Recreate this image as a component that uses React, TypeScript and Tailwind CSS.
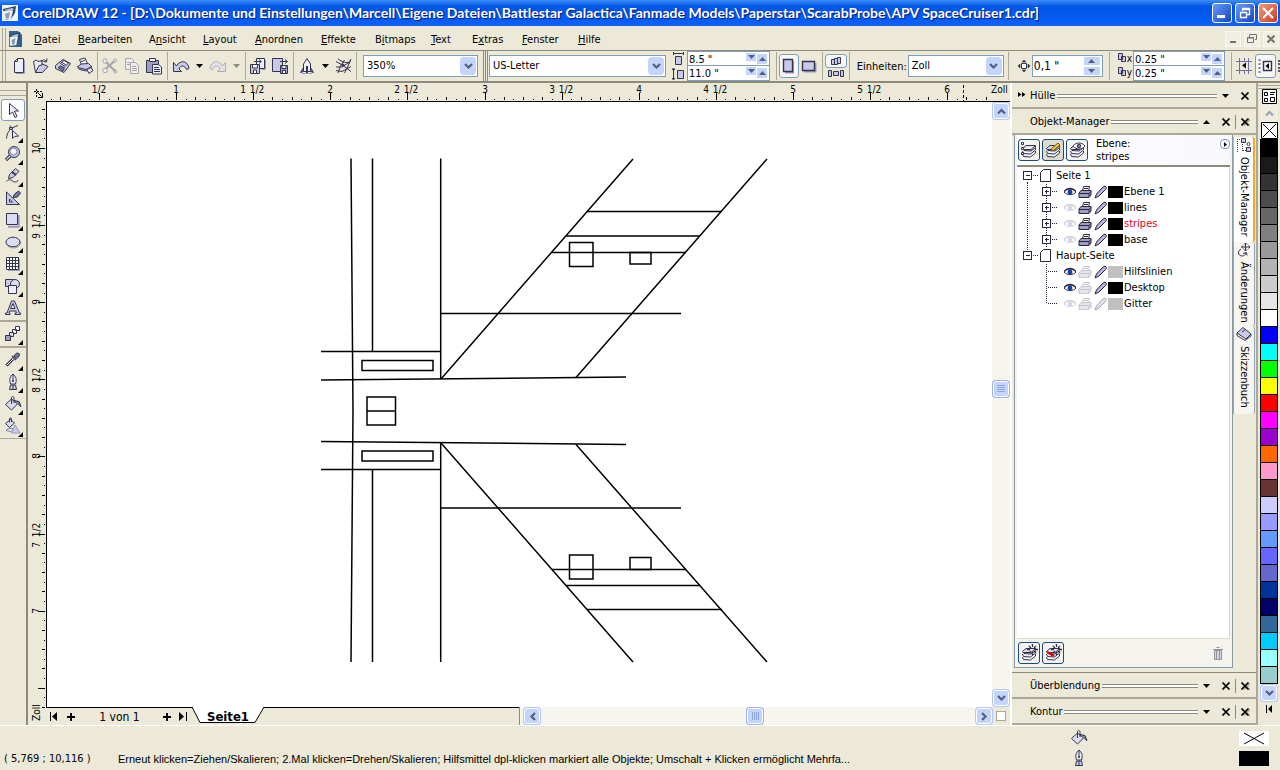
import { Fragment, useState } from 'react'
import type { ReactNode } from 'react'

type IconProps = {
  children: ReactNode;
  w?: number;
  h?: number;
  className?: string;
}

const INK = '#34344e';
const LILAC = '#c9c9ea';

function Icon({ children, w = 18, h = 18, className = '' }: IconProps) {
  return (
    <svg width={w} height={h} viewBox={`0 0 ${w} ${h}`} className={`shrink-0 ${className}`}
      fill="none" stroke={INK} strokeWidth="1" aria-hidden="true">
      {children}
    </svg>
  )
}

const CaretDown = () => (
  <svg width="7" height="4" viewBox="0 0 7 4" className="shrink-0" aria-hidden="true"><path d="M0 0h7L3.500 4z" /></svg>
)

/* ---------- toolbar icons ---------- */

const NewIcon = () => <Icon><path d="M4.500 4.500l3-3h6v14h-9z" fill="#eeeefa" /><path d="M7.500 1.500v3h-3" /><path d="M14.500 3v13.500H6" stroke="#9a9ac0" /></Icon>;

const OpenIcon = () => (
  <Icon>
    <path d="M3.500 15.500l-2-11 3-1.500 1.500 1.500 4-1v4" fill="#eeeefa" />
    <path d="M3.500 15.500l3.500-7 3-.5.500-1 5.500 2.500-5.500 6z" fill={LILAC} />
    <path d="M9.500 5c1-2.500 3-3 5-.500M15 1.500l-.500 3.500-3-.500" />
  </Icon>
);

const SaveIcon = () => (
  <Icon>
    <path d="M1.500 8.500L9 2.500l7.500 4-6.500 9-8.500-4z" fill={LILAC} />
    <path d="M6.500 6.500l3.500-3 4.500 2.500-3.500 3.500z" fill="#fff" />
    <path d="M4 10.500l2.500-1.500 4 2-1.500 3z" fill="#77779c" />
    <path d="M8 5.500l4 2.500" />
  </Icon>
);

const PrintIcon = () => (
  <Icon>
    <path d="M5.500 8L3.500 2.500 9 1l2.500 6z" fill="#fff" />
    <path d="M1.500 9.500l4-2.500 7-.500 3.500 3.500-5.500 4-7-1.500z" fill={LILAC} />
    <path d="M2 10.500l8 2 6-3M5 4.500l4-1" />
    <path d="M11 12.500l4-2 2 3-4 3z" fill="#eeeefa" />
  </Icon>
);

const CutIcon = () => (
  <Icon>
    <g stroke="#a9a6a6">
      <path d="M5.500 5.500l9 9M13.500 4L5 11.500" strokeWidth="2.200" />
      <circle cx="4" cy="4" r="2.200" fill="#ececf2" /><circle cx="4" cy="13.500" r="2.200" fill="#ececf2" />
      <circle cx="14" cy="3.500" r="1.500" /><circle cx="14.500" cy="14.500" r="1.500" />
    </g>
  </Icon>
);

const CopyIcon = () => (
  <Icon>
    <g stroke="#a9a6a6" fill="#ececf2">
      <path d="M2.500 1.500h6l2 2v9h-8z" /><path d="M7.500 5.500h5l3 3v8h-8z" />
      <path d="M4 5.500h4M4 7.500h3M9 9.500h4M9 11.500h5M9 13.500h5" />
    </g>
  </Icon>
);

const PasteIcon = () => (
  <Icon>
    <path d="M1.500 3.500h12v12h-12z" fill="#9d9dc4" /><path d="M4.500 1.500h6v3h-6z" fill="#fff" />
    <path d="M7.500 7.500h6l3 2.500v7h-9z" fill="#eeeefa" /><path d="M9 10.500h5M9 12.500h6M9 14.500h6" />
  </Icon>
);

const UndoIcon = () => <Icon><path d="M1.500 5.500v9h8l-2.500-2.500c1-4 6-4 7.500.500l2.500-1C16 3.500 8 2.500 4.500 9z" fill={LILAC} /></Icon>;

const RedoIcon = () => <Icon><path d="M16.500 5.500v9h-8l2.500-2.500c-1-4-6-4-7.500.500L1 11.500C2 3.500 10 2.500 13.500 9z" fill="#e2e2ea" stroke="#b0aead" /></Icon>;

const ImportIcon = () => (
  <Icon>
    <path d="M7.500 1.500h8v10h-8z" fill="#eeeefa" /><path d="M5 4.500h7M10 2.500l2.500 2-2.500 2" />
    <path d="M1.500 7.500h9v9h-9z" fill={LILAC} /><path d="M3.500 8v3h5V8M4.500 16v-3h3v3" fill="#fff" /><path d="M16.500 3v9.500h-4" stroke="#9a9ac0" />
  </Icon>
);

const ExportIcon = () => (
  <Icon>
    <path d="M1.500 1.500h10v13h-10z" fill={LILAC} /><path d="M9 4.500h7M14 2.500l2.500 2-2.500 2" />
    <path d="M9.500 8.500h7v8h-7z" fill="#9d9dc4" /><path d="M11 9v2.500h4V9M11.500 16v-2.500h3V16" fill="#fff" />
  </Icon>
);

const RocketIcon = () => (
  <Icon>
    <path d="M2.500 15.500l3-5v4zM15.500 15.500l-3-5v4z" fill="#77779c" />
    <path d="M5.500 14.500V7L9 1.500 12.500 7v7.500z" fill="#eeeefa" /><path d="M9 9v7" strokeWidth="2" /><path d="M4 16.500h10" stroke="#9a9ac0" />
  </Icon>
);

const NetIcon = () => <Icon><path d="M1 4.500l7 4 8 6M1 10l6 0 9-6M3 16l2.500-7 4-6M9.500 16l3-6 3.500-8M1 13.500l6 1 9-5M3 2l5 3 7 1" /><circle cx="8" cy="8" r="1" fill={INK} /></Icon>;

/* ---------- toolbox icons ---------- */

const tools: { name: string; flyout?: boolean; icon: ReactNode }[] = [
  { name: 'Auswahl', icon: <Icon><path d="M5.500 2.500v11l3-2.500 2.500 5.500 2-1-2.500-5.500h4z" fill="#eeeefa" /></Icon> },
  { name: 'Form', flyout: true, icon: <Icon><path d="M2.500 15.500C3 9 6 5 14 2.500M6 2.500l2 3" /><path d="M5.500 4.500h3v2h-3z" fill={LILAC} /><path d="M8.500 7.500v8l2-2 4-.5z" fill="#eeeefa" /></Icon> },
  { name: 'Zoom', flyout: true, icon: <Icon><path d="M6.500 10.500L2 15" strokeWidth="3.400" /><path d="M6.500 10.500L2.500 14.500" stroke={LILAC} strokeWidth="1.500" /><circle cx="10" cy="7" r="5.500" fill={LILAC} /><circle cx="9.500" cy="6.500" r="3.500" fill="#f4f4ff" stroke="#8080aa" /></Icon> },
  { name: 'Freihand', flyout: true, icon: <Icon><path d="M4.500 11.500l1-4L11.500 1.500l3.500 3L9 10.500z" fill={LILAC} /><path d="M8 5l4 3" strokeWidth="1.600" /><path d="M2.500 14.500c2-2.500 4-2 6-.500s4 1.500 6-1" /></Icon> },
  { name: 'Bemaßung', icon: <Icon><path d="M2.500 3v12.500h13z" fill={LILAC} /><path d="M5.500 10v3h3z" fill="#fff" /><path d="M9 8.500l1.500-3.500 4-3 2 2-3 4z" fill="#77779c" /></Icon> },
  { name: 'Rechteck', flyout: true, icon: <Icon><path d="M14.700 4v11.700H4" stroke="#9a9ac0" strokeWidth="2" /><path d="M2.500 2.500h11v11h-11z" fill="#dcdcf0" /></Icon> },
  { name: 'Ellipse', flyout: true, icon: <Icon><ellipse cx="9.500" cy="10" rx="7" ry="5" stroke="#9a9ac0" /><ellipse cx="9" cy="9" rx="7" ry="4.800" fill="#dcdcf0" /></Icon> },
  { name: 'Gitterpapier', flyout: true, icon: <Icon><path d="M2.500 2.500h12v12h-12z" fill="#fff" /><path d="M2.500 5.500h12M2.500 8.500h12M2.500 11.500h12M5.500 2.500v12M8.500 2.500v12M11.500 2.500v12" /><path d="M4 15.500h11.500V4" stroke="#9a9ac0" /></Icon> },
  { name: 'Standardformen', flyout: true, icon: <Icon><path d="M1.500 2.500h8v7h-8z" fill={LILAC} /><circle cx="11" cy="7" r="4.500" fill="#dcdcf0" /><path d="M4.500 8.500h8v8h-8z" fill="#eeeefa" /></Icon> },
  { name: 'Text', icon: <Icon><path d="M1.500 15.500h4.500v-1.500H5l.7-2h6l.8 2H11v1.500h5.500V14h-1L10.500 2h-3L3 14H1.500zM6.500 9.500L9 4.500l2 5z" fill={LILAC} fillRule="evenodd" /></Icon> },
  { name: 'Überblendung', flyout: true, icon: <Icon><path d="M11.500 1.500h4v4h-4zM8.500 4.500h4v4h-4z" fill="#fff" /><path d="M5.500 7.500h4v4h-4z" fill="#dcdcf0" /><path d="M1.500 10.500h5v5h-5z" fill="#9d9dc4" /></Icon> },
  { name: 'Pipette', flyout: true, icon: <Icon><path d="M9 8l-6.500 6.500" strokeWidth="3" /><path d="M9 8l-6 6" stroke="#fff" /><path d="M8 5l4 4" strokeWidth="1.600" /><path d="M10 5l2-2.500 2-.5 1.500 1-.5 2.500-2.500 2z" fill="#77779c" /></Icon> },
  { name: 'Umriss', flyout: true, icon: <PenNib /> },
  { name: 'Füllung', flyout: true, icon: <Bucket /> },
  { name: 'Interaktive Füllung', flyout: true, icon: <Icon><path d="M1.500 6.500l5-4 4 3.500-5 4.500z" fill="#dcdcf0" /><path d="M5.500 5.500V2c0-1.500 2-1.500 2 0v3" /><path d="M2 13.500l3-2h5l-3 3z" fill="#eeeefa" stroke="#8080aa" /><path d="M11 8l5 8H7.500z" fill={LILAC} stroke="#9a9ac0" /></Icon> },
];

function PenNib() {
  return (
    <Icon>
      <path d="M9 1c3 3 4 5 2.500 10h-5C5 6 6 4 9 1z" fill="#eeeefa" /><path d="M9 2v5" /><circle cx="9" cy="8" r=".700" fill={INK} />
      <path d="M6.500 12h5l1 4.500h-7z" fill={LILAC} /><path d="M9 12v5" />
    </Icon>
  )
}

function Bucket() {
  return (
    <Icon>
      <path d="M1.500 9.500L7.500 4l6 5-6 6z" fill="#dcdcf0" /><path d="M7.500 9V3c0-2 2.500-2 2.500 0v5" />
      <path d="M10 5.500l5 1 2 5c-1 .5-2-2-3-3" fill="#77779c" />
    </Icon>
  )
}

/* ---------- small controls ---------- */

const Sep = () => <span className="mx-1 h-7 w-px shrink-0 bg-[#aca899]" />;

function ToolButton({ label, children }: { label: string; children: ReactNode }) {
  return <button type="button" aria-label={label} className="flex h-6 w-[22px] shrink-0 items-center justify-center">{children}</button>
}

function Chevron({ up = false }: { up?: boolean }) {
  return (
    <svg width="9" height="7" viewBox="0 0 9 7" fill="none" stroke="#4d6185" strokeWidth="2.200" aria-hidden="true">
      <path d={up ? 'M1 5.500l3.500-3.500L8 5.500' : 'M1 1l3.500 3.500L8 1'} />
    </svg>
  )
}

function Combo({ id, label, value, className }: { id?: string; label?: string; value: string; className: string }) {
  return (
    <div className={`relative h-[22px] shrink-0 border border-[#7f9db9] bg-white ${className}`}>
      <select id={id} aria-label={label} defaultValue={value} className="h-full w-full appearance-none bg-transparent pl-[3px] text-[11px] leading-5 outline-none">
        <option>{value}</option>
      </select>
      <span className="pointer-events-none absolute inset-y-px right-px flex w-4 items-center justify-center rounded-sm bg-[#c4d4fb]">
        <Chevron />
      </span>
    </div>
  )
}

function SpinRow({ label, value }: { label: string; value: string }) {
  const [val, setVal] = useState(value);

  return (
    <div className="flex h-[14px] items-center gap-px bg-white">
      <input aria-label={label} value={val} onChange={(e) => setVal(e.target.value)} className="w-0 min-w-0 flex-1 bg-transparent pt-0.5 pl-px text-[11px] leading-3 outline-none" />
      <button type="button" aria-label={`${label} kleiner`} className="mb-1 flex h-2 w-2.5 items-center justify-center bg-[#c4d4fb]">
        <svg width="7" height="4" aria-hidden="true"><path d="M0 0h7L3.500 4z" fill="#4d6185" /></svg>
      </button>
      <button type="button" aria-label={`${label} größer`} className="mr-0.5 flex h-2.5 w-2.5 items-center justify-center bg-[#c4d4fb]">
        <svg width="7" height="4" aria-hidden="true"><path d="M0 4h7L3.500 0z" fill="#4d6185" /></svg>
      </button>
    </div>
  )
}

/* ---------- title bar and menu ---------- */

function AppLogo({ small = false }: { small?: boolean }) {
  return (
    <svg width={small ? 13 : 16} height="16" viewBox="0 0 16 16" className="shrink-0" preserveAspectRatio="none" aria-hidden="true">
      <path d={small ? 'M0 0h11l5 4v12H0z' : 'M0 0h16v16H0z'} fill={small ? '#35618f' : '#f6f6ff'} />
      <path d="M1 4l13-3-1 7-4 6-8 1z" fill="#27486e" /><path d="M1 6l8-1 2 1-2 8-8 1z" fill="#eef0f8" />
      <path d="M3 9l5-2-1 6-3 1z" fill="#8a9cb4" /><path d="M2 5l8-2 2 1-2 2z" fill="#b8c4d8" />
    </svg>
  )
}

function TitleBar() {
  return (
    <header className="flex h-[26px] shrink-0 items-center bg-linear-to-b from-[#3c8cf6] via-[#0054e6] via-25% to-[#0a62fb] pr-0.5 pl-0.5">
      <AppLogo />
      <h1 className="ml-1 flex-1 overflow-hidden font-[Lato,'Open_Sans',sans-serif] text-[14px] leading-5 font-bold whitespace-nowrap text-white [text-shadow:1px_1px_1px_#0a1883]">
        CorelDRAW 12 - [D:\Dokumente und Einstellungen\Marcell\Eigene Dateien\Battlestar Galactica\Fanmade Models\Paperstar\ScarabProbe\APV SpaceCruiser1.cdr]
      </h1>
      <div className="flex gap-[3px]">
        <button type="button" aria-label="Minimieren" className="flex size-5 items-end rounded-[3px] border border-white bg-linear-to-br from-[#6a9bf6] to-[#1941c4] p-1"><span className="h-[3px] w-2 bg-white" /></button>
        <button type="button" aria-label="Wiederherstellen" className="flex size-5 items-center justify-center rounded-[3px] border border-white bg-linear-to-br from-[#6a9bf6] to-[#1941c4]">
          <svg width="12" height="12" viewBox="0 0 12 12" fill="none" stroke="#fff" aria-hidden="true"><path d="M3.500 4V1.500h7v6H8M4 2.500h7M1.500 5.500h6v5h-6zM1 5.500h7" strokeWidth="1.300" /></svg>
        </button>
        <button type="button" aria-label="Schließen" className="flex size-5 items-center justify-center rounded-[3px] border border-white bg-linear-to-br from-[#f09a80] to-[#cc3311]">
          <svg width="12" height="12" viewBox="0 0 12 12" stroke="#fff" strokeWidth="2" aria-hidden="true"><path d="M1 1l10 10M11 1L1 11" /></svg>
        </button>
      </div>
    </header>
  )
}

const menus: [string, string, string, string][] = [
  ['', 'D', 'atei', 'w-11'],
  ['', 'B', 'earbeiten', 'w-[71px]'],
  ['A', 'n', 'sicht', 'w-[54px]'],
  ['', 'L', 'ayout', 'w-[52px]'],
  ['', 'A', 'nordnen', 'w-[66px]'],
  ['', 'E', 'ffekte', 'w-[54px]'],
  ['B', 'i', 'tmaps', 'w-14'],
  ['', 'T', 'ext', 'w-[41px]'],
  ['E', 'x', 'tras', 'w-[50px]'],
  ['', 'F', 'enster', 'w-14'],
  ['', 'H', 'ilfe', 'w-10'],
];

const Grip = () => <span className="ml-0.5 h-full w-1 shrink-0 border-x border-[#aca899]" />;

function MenuBar() {
  return (
    <nav className="flex h-[25px] shrink-0 items-center border-b border-[#8d897b] bg-[#ece9d8] pt-0.5">
      <Grip />
      <span className="mr-3 ml-[3px]"><AppLogo small /></span>
      {menus.map(([before, key, after, width]) => (
        <button key={key + after} type="button" className={`shrink-0 pt-0.5 text-left ${width}`}>{before}<u>{key}</u>{after}</button>
      ))}
      <div className="ml-auto flex gap-[3px] pr-px">
        <button type="button" aria-label="Fenster minimieren" className="flex size-4 items-end justify-center border border-[#f8f7f2] bg-[#f1efe5] pb-[3px]"><span className="h-0.5 w-1.5 bg-[#777468]" /></button>
        <button type="button" aria-label="Fenster wiederherstellen" className="flex size-4 items-center justify-center border border-[#f8f7f2] bg-[#f1efe5]">
          <svg width="10" height="10" viewBox="0 0 10 10" fill="none" stroke="#777468" aria-hidden="true"><path d="M2.500 3V.500h7v5H8M.500 3.500h6v5h-6zM0 4h7" /></svg>
        </button>
        <button type="button" aria-label="Fenster schließen" className="flex size-4 items-center justify-center border border-[#f8f7f2] bg-[#f1efe5]">
          <svg width="8" height="8" viewBox="0 0 8 8" stroke="#777468" strokeWidth="2" aria-hidden="true"><path d="M.500.500l7 7M7.500.500l-7 7" /></svg>
        </button>
      </div>
    </nav>
  )
}

function ToolBar() {
  return (
    <div className="flex h-8 shrink-0 items-center overflow-hidden border-b-2 border-[#8d897b] bg-[#ece9d8]">
      <div className="flex h-full w-[483px] shrink-0 items-center">
        <Grip />
        <span className="w-0.5" />
        <ToolButton label="Neu"><NewIcon /></ToolButton>
        <ToolButton label="Öffnen"><OpenIcon /></ToolButton>
        <ToolButton label="Speichern"><SaveIcon /></ToolButton>
        <ToolButton label="Drucken"><PrintIcon /></ToolButton>
        <span className="mx-px h-7 w-px bg-[#aca899]" />
        <ToolButton label="Ausschneiden"><CutIcon /></ToolButton>
        <ToolButton label="Kopieren"><CopyIcon /></ToolButton>
        <ToolButton label="Einfügen"><PasteIcon /></ToolButton>
        <span className="mx-0.5 h-7 w-px bg-[#aca899]" />
        <ToolButton label="Rückgängig"><UndoIcon /></ToolButton>
        <span className="mx-1"><CaretDown /></span>
        <ToolButton label="Wiederherstellen"><RedoIcon /></ToolButton>
        <span className="mx-1 opacity-40"><CaretDown /></span>
        <span className="mx-px h-7 w-px bg-[#aca899]" />
        <ToolButton label="Importieren"><ImportIcon /></ToolButton>
        <ToolButton label="Exportieren"><ExportIcon /></ToolButton>
        <span className="mx-0.5 h-7 w-px bg-[#aca899]" />
        <ToolButton label="Anwendungen"><RocketIcon /></ToolButton>
        <span className="mx-1"><CaretDown /></span>
        <ToolButton label="Online"><NetIcon /></ToolButton>
        <span className="mr-1.5 ml-px h-7 w-px bg-[#aca899]" />
        <Combo label="Zoomfaktor" value="350%" className="w-[115px]" />
      </div>
      <div className="flex h-full w-[5px] shrink-0 border-x border-[#8d897b]"><span className="mx-auto w-px bg-[#8d897b]" /></div>
      <Combo label="Papierformat" value="US-Letter" className="ml-px w-[177px]" />
      <div className="ml-1.5 flex flex-col gap-px">
        <Icon w={14} h={14}><path d="M1 1.500h11M1.500 0v3M11.500 0v3" /><path d="M3.500 4.500h6v8h-6z" fill={LILAC} /></Icon>
        <Icon w={14} h={14}><path d="M1.500 2v10M0 3l1.500-2L3 3M0 11l1.500 2L3 11" /><path d="M5.500 3.500h6v8h-6z" fill={LILAC} /></Icon>
      </div>
      <div className="ml-px w-[83px] shrink-0 divide-y divide-[#7f9db9] border border-[#7f9db9]">
        <SpinRow label="Breite" value={'8.5 "'} />
        <SpinRow label="Höhe" value={'11.0 "'} />
      </div>
      <span className="ml-1.5 h-7 w-px bg-[#aca899]" />
      <button type="button" aria-label="Hochformat" className="ml-0.5 flex h-6 w-[22px] items-center justify-center rounded-[3px] border border-[#7f9db9] bg-[#f7f7f5]">
        <Icon w={13} h={16}><path d="M11 3v11.500H3" stroke="#9a9ac0" strokeWidth="2" /><path d="M1.500 1.500h9v12h-9z" fill={LILAC} strokeWidth="1.400" /></Icon>
      </button>
      <ToolButton label="Querformat"><Icon w={17} h={13}><path d="M14.500 3v8.500H3" stroke="#9a9ac0" strokeWidth="2" /><path d="M1.500 1.500h12v9h-12z" fill={LILAC} strokeWidth="1.400" /></Icon></ToolButton>
      <span className="ml-px h-7 w-px bg-[#aca899]" />
      <div className="ml-0.5 flex flex-col items-center">
        <button type="button" aria-label="Alle Seiten" className="flex h-3.5 w-[22px] items-center justify-center rounded-[3px] border border-[#7f9db9] bg-[#f7f7f5]">
          <Icon w={12} h={10}><path d="M1.500 3.500h3v5h-3zM4.500 2.500h3v6h-3zM7.500 1.500h3v6h-3z" fill={LILAC} /></Icon>
        </button>
        <button type="button" aria-label="Aktuelle Seite"><Icon w={18} h={10}><path d="M1.500 2.500h3v6h-3zM6.500 3.500h5v4h-5zM13.500 2.500h3v6h-3z" fill={LILAC} /></Icon></button>
      </div>
      <span className="ml-0.5 h-7 w-px bg-[#aca899]" />
      <label htmlFor="units" className="ml-[7px] w-[51px] shrink-0 pt-0.5 whitespace-nowrap">Einheiten:</label>
      <Combo id="units" value="Zoll" className="w-24" />
      <Sep />
      <span className="ml-1"><Icon w={15} h={15}><path d="M4.500 4.500h5v5h-5z" fill="#fff" /><path d="M5 3l2-2 2 2zM5 11l2 2 2-2zM3 5L1 7l2 2zM11 5l2 2-2 2z" fill={INK} strokeWidth=".6" /></Icon></span>
      <div className="flex h-[22px] w-[71px] shrink-0 items-center border border-[#7f9db9] bg-white pr-0.5">
        <input aria-label="Schrittweite" defaultValue={'0,1 "'} className="w-0 min-w-0 flex-1 pl-px text-xs outline-none" />
        <div className="flex flex-col gap-0.5">
          <button type="button" aria-label="Mehr" className="flex h-2 w-4 items-center justify-center bg-[#c4d4fb]"><svg width="7" height="4" aria-hidden="true"><path d="M0 4h7L3.500 0z" fill="#4d6185" /></svg></button>
          <button type="button" aria-label="Weniger" className="flex h-2 w-4 items-center justify-center bg-[#c4d4fb]"><svg width="7" height="4" aria-hidden="true"><path d="M0 0h7L3.500 4z" fill="#4d6185" /></svg></button>
        </div>
      </div>
      <span className="ml-1.5 h-7 w-px bg-[#aca899]" />
      <div className="ml-2 flex flex-col text-[10px] leading-[14px]">
        {['x', 'y'].map((axis) => (
          <span key={axis} className="flex items-end">
            <Icon w={9} h={14}><path d="M.500 1.500h4v6h-4zM3.500 4.500h4v5h-4z" fill={LILAC} /></Icon>{axis}
          </span>
        ))}
      </div>
      <div className="ml-px w-[92px] shrink-0 divide-y divide-[#7f9db9] border border-[#7f9db9]">
        <SpinRow label="Duplikatabstand x" value={'0.25 "'} />
        <SpinRow label="Duplikatabstand y" value={'0.25 "'} />
      </div>
      <span className="mr-px ml-1.5 h-7 w-px shrink-0 bg-[#aca899]" />
      <ToolButton label="An Gitter ausrichten"><Icon><path d="M4.500 1v16M13.500 1v16M1 4.500h16M1 13.500h16M9.500 1v3M9.500 14v3" stroke="#7070a0" /><path d="M11 5.500v6L7 8.500z" fill="#000" stroke="none" /></Icon></ToolButton>
      <button type="button" aria-label="An Hilfslinien ausrichten" className="flex h-6 w-[21px] shrink-0 items-center justify-center rounded-[3px] border border-[#7f9db9] bg-[#f7f7f5]">
        <Icon w={17}><path d="M2.500 2v15" strokeDasharray="2 2" strokeWidth="2" stroke="#8080aa" /><path d="M6.500 4.500h8v9h-8z" strokeWidth="1.400" /><path d="M12 6v6L8.500 9z" fill="#000" stroke="none" /></Icon>
      </button>
      <span className="ml-0.5 h-3 border-l-2 border-dotted border-[#55557a]" />
    </div>
  )
}

function ToolBox() {
  return (
    <aside className="flex w-7 shrink-0 flex-col border-r-2 border-[#8d897b] bg-[#ece9d8]">
      <div className="mt-[7px] mb-[3px] h-1.5 border-y border-[#aca899]" />
      {tools.map((tool, i) => (
        <Fragment key={tool.name}>
          {(i === 10 || i === 11) && <hr className="my-px h-0.5 border-t-0 bg-[#aca899]" />}
          <button
            type="button"
            aria-label={tool.name}
            className={i === 0
              ? 'ml-px flex h-[22px] w-6 shrink-0 items-center justify-center rounded-[3px] border border-[#7f9db9] bg-white'
              : 'relative flex h-[22px] w-[26px] shrink-0 items-center justify-center'}
          >
            {tool.icon}
            {tool.flyout && <svg width="5" height="5" className="absolute right-[3px] bottom-0" aria-hidden="true"><path d="M5 0v5H0z" /></svg>}
          </button>
        </Fragment>
      ))}
      <hr className="my-px border-[#aca899]" />
    </aside>
  )
}

/* ---------- rulers ---------- */

const INCH = 154.200;

// heights of the sixteenth ticks, whole and half inches are the longest
function tickLength(i: number) {
  if (i % 8 === 0) return 7;
  if (i % 2 === 0) return 3;
  return 1;
}

function TopRuler() {
  const ticks = Array.from({ length: 101 }, (_, i) => i);

  return (
    <svg className="block h-[18px] w-full shrink-0" fontSize="10" aria-hidden="true">
      {ticks.map((i) => {
        const x = Math.round(53 + ((i - 8) * INCH) / 16);
        if (x < 3 || x > 960) return null;
        const whole = Math.floor(i / 16);
        const half = i % 16 === 8;
        return (
          <g key={i}>
            <rect x={x} y={17 - tickLength(i)} width="1" height={tickLength(i)} />
            {i % 16 === 0 && <text x={x} y="10" textAnchor="middle">{whole}</text>}
            {half && <text x={whole > 0 ? x + 4 : x} y="10" textAnchor="middle">1/2</text>}
            {half && whole > 0 && <text x={x - 10} y="10" textAnchor="middle">{whole}</text>}
          </g>
        )
      })}
      <path d="M917.500 2v16" stroke="#000" strokeDasharray="3 2" />
      <text x="945" y="10">Zoll</text>
    </svg>
  )
}

function SideRuler() {
  const ticks = Array.from({ length: 70 }, (_, i) => i);

  return (
    <svg className="block w-[18px] flex-1" fontSize="10" aria-hidden="true">
      {ticks.map((i) => {
        // 10 inches sit 47px below the top edge
        const y = Math.round(47 + ((i - 5) * INCH) / 16);
        if (y < 2 || y > 606) return null;
        const sixteenths = 165 - i;
        const whole = Math.floor(sixteenths / 16);
        const half = sixteenths % 16 === 8 && y < 560;
        return (
          <g key={i}>
            <rect x={17 - tickLength(sixteenths)} y={y} width={tickLength(sixteenths)} height="1" />
            {sixteenths % 16 === 0 && <text textAnchor="middle" transform={`translate(12 ${y}) rotate(-90)`}>{whole}</text>}
            {half && <text textAnchor="middle" transform={`translate(12 ${y - 4}) rotate(-90)`}>1/2</text>}
            {half && <text textAnchor="middle" transform={`translate(12 ${y + 11}) rotate(-90)`}>{whole}</text>}
          </g>
        )
      })}
      <text transform="translate(12 620) rotate(-90)">Zoll</text>
    </svg>
  )
}

function Drawing() {
  return (
    <svg className="block h-full w-full" fill="none" stroke="#000" strokeWidth="1.500" role="img" aria-label="Zeichnung">
      <g transform="translate(-47 -102)">
        <path d="M351 158.500L353 410.500L351 662M372.500 158.500V351.500M372.500 469.500V662M440.700 158.500V379M440.700 443V662" />
        <path d="M321 351.500H441M321 380L626 377M321 441.500L626 444.500M321 469.500H441" />
        <path d="M362 360.500h71v10h-71zM362 451h71v10h-71zM367 397h28.500v28H367zM367 411h28.500" />
        <path d="M441 379L633 159M576 377.500L767 159M441 443L633 662M576 444.500L767 662" />
        <path d="M587 211.500H722M566 236H700M552 252.500H686M441 313.500H681" />
        <path d="M587 609.500H722M566 585.500H700M552 569.500H686M441 508H681" />
        <path d="M569.500 242.500h23.500v24h-23.500zM630 252.500h21v11.500h-21zM569.500 555h23.500v24h-23.500zM630 557.500h21v12h-21z" />
      </g>
    </svg>
  )
}

function ScrollButton({ label, children }: { label: string; children: ReactNode }) {
  return (
    <button type="button" aria-label={label} className="flex size-4 shrink-0 items-center justify-center rounded-[3px] border border-white bg-[#c4d4fb] shadow-[0_0_0_1px_#b4c8f6]">
      {children}
    </button>
  )
}

function PageBar() {
  return (
    <div className="flex h-[18px] shrink-0 bg-[#ece9d8]">
      <div className="flex w-[473px] items-center border-t border-black">
        <button type="button" aria-label="Erste Seite" className="ml-1"><svg width="8" height="9" aria-hidden="true"><path d="M0 0h1v9H0zM7 0v9L2 4.500z" /></svg></button>
        <button type="button" aria-label="Seite davor einfügen" className="ml-[9px]"><svg width="9" height="8" aria-hidden="true"><path d="M3 0h2v8H3zM0 3h8v2H0z" /></svg></button>
        <span className="w-[87px] text-center text-xs">1 von 1</span>
        <button type="button" aria-label="Seite danach einfügen"><svg width="8" height="8" aria-hidden="true"><path d="M3 0h2v8H3zM0 3h8v2H0z" /></svg></button>
        <button type="button" aria-label="Letzte Seite" className="ml-2"><svg width="8" height="9" aria-hidden="true"><path d="M7 0h1v9H7zM0 0v9l5-4.500z" /></svg></button>
        <button type="button" className="relative ml-1 h-[17px] w-[74px] text-[13px] leading-[14px] font-bold">
          <svg width="74" height="17" className="absolute -top-px left-0" aria-hidden="true"><path d="M1 0l8 15.500h55L73 0" fill="#fff" stroke="#000" /></svg>
          <span className="relative">Seite1</span>
        </button>
      </div>
      <div className="flex flex-1 items-center border-l border-[#8d897b] bg-[#f6f5ef] pl-1">
        <ScrollButton label="Nach links"><span className="rotate-90"><Chevron /></span></ScrollButton>
        <div className="flex flex-1 justify-center pr-1.5">
          <div className="flex h-4 w-4 items-center justify-center gap-px rounded-[3px] border border-white bg-[#c4d4fb] shadow-[0_0_0_1px_#9ab5ee]">
            {[0, 1, 2, 3].map((n) => <span key={n} className="h-2 w-px bg-[#8ea9e6]" />)}
          </div>
        </div>
        <ScrollButton label="Nach rechts"><span className="-rotate-90"><Chevron /></span></ScrollButton>
      </div>
      <span className="flex w-[18px] items-center justify-center"><span className="size-2.5 border border-[#aca899] bg-white" /></span>
    </div>
  )
}

function Workspace() {
  return (
    <main className="flex min-w-0 flex-1 bg-[#ece9d8]">
      <div className="flex w-[18px] shrink-0 flex-col">
        <svg width="18" height="18" fill="none" stroke="#000" aria-hidden="true">
          <path d="M6 8.500h8M8.500 6v9" strokeDasharray="2 1" /><path d="M9.500 9.500l4 4M14.500 10v4.500H10" />
        </svg>
        <SideRuler />
      </div>
      <div className="flex min-w-0 flex-1 flex-col">
        <TopRuler />
        <div className="flex min-h-0 flex-1 border-t border-l border-black bg-white">
          <div className="min-w-0 flex-1"><Drawing /></div>
          <div className="flex w-[18px] flex-col items-center bg-[#f6f5ef] py-px">
            <ScrollButton label="Nach oben"><Chevron up /></ScrollButton>
            <div className="flex flex-1 flex-col justify-center">
              <div className="mb-8 flex size-4 flex-col items-center justify-center gap-px rounded-[3px] border border-white bg-[#c4d4fb] shadow-[0_0_0_1px_#9ab5ee]">
                {[0, 1, 2, 3].map((n) => <span key={n} className="h-px w-2 bg-[#8ea9e6]" />)}
              </div>
            </div>
            <ScrollButton label="Nach unten"><Chevron /></ScrollButton>
          </div>
        </div>
        <PageBar />
      </div>
    </main>
  )
}

/* ---------- dockers ---------- */

const CloseX = ({ ghost = false }: { ghost?: boolean }) => (
  <svg width="9" height="8" viewBox="0 0 9 8" fill="none" aria-hidden="true">
    {ghost && <path d="M3 7.500L9 1.500M5 4l4 4" stroke="#aca899" strokeWidth="1.500" />}
    <path d="M.500.500l7 7M7.500.500l-7 7" stroke="#000" strokeWidth="1.700" />
  </svg>
);

function DockerHeader({ title, open = false, first = false }: { title: string; open?: boolean; first?: boolean }) {
  return (
    <div className="flex h-[26px] shrink-0 items-center border-b-2 border-[#aca899] pt-0.5 pr-1.5">
      <span className="w-[18px] shrink-0 pl-1.5">
        {first && <svg width="8" height="5" className="mb-1" aria-hidden="true"><path d="M0 0v5l3.500-2.500zM4 0v5l3.500-2.500z" /></svg>}
      </span>
      <span className="mr-0.5 whitespace-nowrap">{title}</span>
      <span className="h-1 flex-1 border-y border-[#8d897b] bg-white" />
      <button type="button" aria-label={`${title} aufklappen`} className={open ? 'mr-1.5 ml-[5px] rotate-180' : 'mr-1.5 ml-[5px]'}><CaretDown /></button>
      <button type="button" aria-label={`${title} schließen`} className="ml-1.5"><CloseX /></button>
      {!first && (
        <>
          <span className="mr-[5px] ml-1 h-3.5 w-px bg-[#8d897b]" />
          <button type="button" aria-label="Gruppe schließen"><CloseX ghost /></button>
        </>
      )}
    </div>
  )
}

type Layer = { name: string; visible: boolean; printable: boolean; editable: boolean; color: string; active?: boolean }

const pages: { name: string; expandable: boolean; layers: Layer[] }[] = [
  {
    name: 'Seite 1',
    expandable: true,
    layers: [
      { name: 'Ebene 1', visible: true, printable: true, editable: true, color: 'bg-black' },
      { name: 'lines', visible: false, printable: true, editable: true, color: 'bg-black' },
      { name: 'stripes', visible: false, printable: true, editable: true, color: 'bg-black', active: true },
      { name: 'base', visible: false, printable: true, editable: true, color: 'bg-black' },
    ],
  },
  {
    name: 'Haupt-Seite',
    expandable: false,
    layers: [
      { name: 'Hilfslinien', visible: true, printable: false, editable: true, color: 'bg-[#c0c0c0]' },
      { name: 'Desktop', visible: true, printable: false, editable: true, color: 'bg-black' },
      { name: 'Gitter', visible: false, printable: false, editable: false, color: 'bg-[#c0c0c0]' },
    ],
  },
];

function ExpandBox({ minus = false }: { minus?: boolean }) {
  return (
    <svg width="15" height="16" className="shrink-0" fill="none" stroke="#26263c" shapeRendering="crispEdges" aria-hidden="true">
      <path d="M.500 3.500h8v8h-8z" fill="#fff" /><path d={minus ? 'M2.500 7.500h4' : 'M2.500 7.500h4M4.500 5.500v4'} />
      <path d="M10 7.500h5" strokeDasharray="1 1" />{!minus && <path d="M4.500 0v3M4.500 12v4" strokeDasharray="1 1" />}
    </svg>
  )
}

function LayerRow({ layer, expandable, last }: { layer: Layer; expandable: boolean; last: boolean }) {
  return (
    <li className="flex h-4 items-center">
      {expandable ? <ExpandBox /> : (
        <svg width="15" height="16" className="shrink-0" fill="none" stroke="#26263c" strokeDasharray="1 1" shapeRendering="crispEdges" aria-hidden="true">
          <path d={last ? 'M4.500 0v8M6 7.500h9' : 'M4.500 0v16M6 7.500h9'} />
        </svg>
      )}
      <svg width="14" height="10" viewBox="0 0 14 10" className={`ml-1.5 shrink-0 ${layer.visible ? '' : 'opacity-20'}`} fill="none" stroke="#26263c" aria-hidden="true">
        <path d="M1 5c3-4 9-4 12 0-3 3.500-9 3.500-12 0z" fill="#fff" /><path d="M1.500 4c3-3.500 8-3.500 11 0" strokeWidth="1.500" /><circle cx="7" cy="5" r="2" fill="#1046c8" stroke="#14287a" />
      </svg>
      <svg width="14" height="14" viewBox="0 0 14 14" className={`ml-px shrink-0 ${layer.printable ? '' : 'opacity-25'}`} fill="none" stroke="#26263c" aria-hidden="true">
        <path d="M4.500 6l1-4.500h6l-1 4.500M6 3.500h4" fill="#fff" /><path d="M1 8l2-2.500h10V10l-2 2.500H1z" fill="#9d9dc4" /><path d="M1 8.500h10l2-2M11 8v4" />
      </svg>
      <svg width="14" height="14" viewBox="0 0 14 14" className={`ml-0.5 shrink-0 ${layer.editable ? '' : 'opacity-40'}`} fill="none" stroke="#26263c" aria-hidden="true">
        <path d="M1 13l1.500-4L9 2l2-1 1.500 1.500-1 2L5 11z" fill="#b4b4dc" />
      </svg>
      <span className={`h-3 w-[15px] shrink-0 ${layer.color}`} />
      <span className={layer.active ? 'pl-px text-[#f00020]' : 'pl-px'}>{layer.name}</span>
    </li>
  )
}

const Layers = ({ children }: { children?: ReactNode }) => (
  <Icon>
    <path d="M2.500 13l1 2.500 7 .500 5-4v-2" fill="#f2f2fb" /><path d="M2.500 10l1 2.500 7 .500 5-4v-2" fill="#f2f2fb" />
    <path d="M2.500 7.500l3.500-3h9.500l-4.500 4-7.500 0zM3 8l1 1.500 7 .500 4.500-3.500v-2" fill="#dcdcf0" />
    {children}
  </Icon>
);

function DockButton({ label, pressed = false, children }: { label: string; pressed?: boolean; children: ReactNode }) {
  return (
    <button type="button" aria-label={label} className={`flex size-[22px] items-center justify-center rounded-[3px] border border-[#1c4a7c] ${pressed ? 'bg-[#dedcd0]' : 'bg-[#f5f4ee]'}`}>{children}</button>
  )
}

const Burst = () => <path d="M12.500 0v3M12.500 8v3M7 5.500h3M15 5.500h3M9 2l2 2M14 7l2 2M16 2l-2 2M11 7L9 9" strokeWidth="1.300" />;

const dockTabs = [
  { name: 'Objekt-Manager', active: true, height: 'h-[105px]', icon: <Icon w={16} h={16}><path d="M1.500 2v13M6.500 7v8M7 13.500h3M1 2.500h4" strokeDasharray="1 1" /><path d="M5.500 1.500h4v4h-4zM10.500 10.500h4v4h-4z" fill={LILAC} /><circle cx="12.500" cy="7" r="1.500" /></Icon> },
  { name: 'Änderungen', active: false, height: 'h-[84px]', icon: <Icon w={16} h={16}><path d="M9.500 1v8M5.500 5h8M8 2.500l1.500-1.500 1.500 1.500M8 7.500l1.500 1.500 1.500-1.500M12.500 3.500L14 5l-1.500 1.500M7 3.500L5.500 5 7 6.500" /><path d="M10 11c-1 4-7 4-7.500 0 0-2 1-3.500 2.500-3.500M7 11.500l3.500-1 .5 3" /></Icon> },
  { name: 'Skizzenbuch', active: false, height: 'h-[88px]', icon: <Icon w={16} h={16}><path d="M1 7l6-5.500L15 8l-5 5z" fill={LILAC} /><path d="M1 7v2.500l8 5 6-4.500V8M6 6l3-2" /></Icon> },
];

function ObjectManager() {
  return (
    <div className="flex min-h-0 flex-1">
      <section className="ml-0.5 flex min-w-0 flex-1 flex-col border border-t-0 border-[#8a9aa4] bg-[#f4f3ee]">
        <div className="mx-0.5 flex h-8 shrink-0 items-center gap-0.5 border-b-2 border-[#8d897b] bg-linear-to-r from-white to-[#f8f8fd] pl-px">
          <DockButton label="Objekteigenschaften"><Layers><path d="M1.500 1.500h2v2h-2zM1.500 6.500h2v2h-2zM1.500 11.500h2v2h-2z" fill="#fff" /></Layers></DockButton>
          <DockButton label="Über Ebenen bearbeiten" pressed><Layers><path d="M7 10l1-3 6-5 2 2-6 5z" fill="#f5c83c" stroke="#7a5a10" /></Layers></DockButton>
          <DockButton label="Ebenenansicht"><Layers><path d="M5 5c3-4 9-4 12 0-3 4-9 4-12 0z" fill="#fff" /><circle cx="11" cy="5" r="1.800" fill="#77779c" /></Layers></DockButton>
          <p className="ml-1.5 flex-1 leading-[13px]">Ebene:<br />stripes</p>
          <button type="button" aria-label="Docker-Menü" className="mb-3 flex size-2.5 items-center justify-center rounded-sm border border-[#7f9db9] bg-white"><svg width="3" height="5" aria-hidden="true"><path d="M0 0v5l3-2.500z" /></svg></button>
        </div>
        <ul className="mx-0.5 flex-1 overflow-hidden border-r border-b border-[#dedcd0] bg-white pt-px pl-1.5">
          {pages.map((page, i) => (
            <li key={page.name} className="relative">
              {i === 0 && <span className="absolute top-3.5 bottom-[-4px] left-1 border-l border-dotted border-[#26263c]" />}
              <div className="flex h-4 items-center">
                <ExpandBox minus />
                <svg width="12" height="14" viewBox="0 0 12 14" fill="#fff" stroke="#26263c" className="ml-0.5 shrink-0" aria-hidden="true"><path d="M.500 3.500l3-3h7v12H.500z" /></svg>
                <span className="pl-1">{page.name}</span>
              </div>
              <ul className="pl-[19px]">
                {page.layers.map((layer, n) => (
                  <LayerRow key={layer.name} layer={layer} expandable={page.expandable} last={n === page.layers.length - 1} />
                ))}
              </ul>
            </li>
          ))}
        </ul>
        <div className="flex h-7 shrink-0 items-center gap-0.5 pt-1 pr-2 pb-1 pl-[3px]">
          <DockButton label="Neue Ebene"><Layers><Burst /></Layers></DockButton>
          <DockButton label="Neue Hauptebene"><Layers><path d="M3 8l7 4" stroke="#d80000" strokeWidth="2.500" /><Burst /></Layers></DockButton>
          <button type="button" aria-label="Löschen" className="ml-auto">
            <Icon w={12} h={15}><g stroke="#93939c"><path d="M2.500 4.500h7v9h-7z" fill="#d4d4da" /><path d="M1 3.500h10M4.500 1.500h3M4.500 5v8M7.500 5v8" /></g></Icon>
          </button>
        </div>
      </section>
      <div className="mt-0.5 flex w-[22px] shrink-0 flex-col">
        {dockTabs.map((tab) => (
          <button
            key={tab.name}
            type="button"
            className={`flex w-[22px] items-center gap-1 overflow-hidden rounded-r-[3px] border-y py-px [writing-mode:vertical-rl] ${tab.height} ${tab.active ? 'border-r-2 border-y-[#aab8c0] border-r-[#f5a623] bg-white' : 'border-r border-[#8fa6b4] bg-[#f6f5ef]'}`}
          >
            {tab.icon}
            <span className="whitespace-nowrap">{tab.name}</span>
          </button>
        ))}
      </div>
      <span className="w-px" />
    </div>
  )
}

function Dockers() {
  return (
    <aside className="flex w-[248px] shrink-0 flex-col border-x-2 border-r-[#aca899] border-l-white bg-[#ece9d8]">
      <DockerHeader title="Hülle" first />
      <DockerHeader title="Objekt-Manager" open />
      <ObjectManager />
      <div className="mt-1 border-t border-[#8d897b]">
        <DockerHeader title="Überblendung" />
        <DockerHeader title="Kontur" />
      </div>
    </aside>
  )
}

/* ---------- colour palette ---------- */

const swatches = [
  'bg-black', 'bg-[#1a1a1a]', 'bg-[#333333]', 'bg-[#4d4d4d]', 'bg-[#666666]', 'bg-[#808080]', 'bg-[#999999]', 'bg-[#b3b3b3]',
  'bg-[#cccccc]', 'bg-[#e6e6e6]', 'bg-white', 'bg-[#0000ff]', 'bg-[#00ffff]', 'bg-[#00ff00]', 'bg-[#ffff00]', 'bg-[#ff0000]',
  'bg-[#ff00ff]', 'bg-[#9900cc]', 'bg-[#ff6600]', 'bg-[#ff99cc]', 'bg-[#663333]', 'bg-[#ccccff]', 'bg-[#9999ff]', 'bg-[#6699ff]',
  'bg-[#6666ff]', 'bg-[#6666cc]', 'bg-[#003399]', 'bg-[#000066]', 'bg-[#336699]', 'bg-[#00ccff]', 'bg-[#99ffff]', 'bg-[#99cccc]',
];

function Palette() {
  return (
    <aside className="flex w-[22px] shrink-0 flex-col items-center bg-[#ece9d8]">
      <div className="mt-0.5 h-1 w-full border-y border-[#aca899]" />
      <button type="button" aria-label="Palettenmenü" className="mb-px">
        <svg width="15" height="15" viewBox="0 0 15 15" fill="#fff" stroke="#000" aria-hidden="true"><path d="M.500.500h14v14H.500zM2.500 3.500h3v3h-3zM2.500 9.500h3v3h-3zM8.500 8.500h4v4h-4zM8 3.500h5M8 5.500h4" /></svg>
      </button>
      <button type="button" aria-label="Palette nach oben" className="flex h-[17px] w-4 items-center justify-center rounded-[3px] border border-white bg-[#f1efe5] opacity-50"><Chevron up /></button>
      <button type="button" aria-label="Keine Farbe" className="bg-white">
        <svg width="17" height="17" viewBox="0 0 17 17" fill="none" stroke="#000" aria-hidden="true"><path d="M.500.500h16v16H.500zM2 2l13 13M15 2L2 15" /></svg>
      </button>
      <div className="w-[18px] border-x border-t border-black">
        {swatches.map((color) => <button key={color} type="button" aria-label="Farbe" className={`block h-[17px] w-full border-b border-black ${color}`} />)}
      </div>
      <div className="mt-px"><ScrollButton label="Palette nach unten"><Chevron /></ScrollButton></div>
      <button type="button" aria-label="Palette erweitern" className="mt-1"><svg width="7" height="8" aria-hidden="true"><path d="M0 0h1v8H0zM6 0v8L2 4z" /></svg></button>
    </aside>
  )
}

function StatusBar() {
  return (
    <footer className="flex h-[45px] shrink-0 border-t border-white bg-[#ece9d8]">
      <span className="w-[118px] shrink-0 self-end pb-[3px] pl-1 whitespace-nowrap">( 5,769 ; 10,116 )</span>
      <span className="flex-1 self-end overflow-hidden pb-[3px] font-['Liberation_Sans',Arial,sans-serif] whitespace-nowrap">Erneut klicken=Ziehen/Skalieren; 2.Mal klicken=Drehen/Skalieren; Hilfsmittel dpl-klicken markiert alle Objekte; Umschalt + Klicken ermöglicht Mehrfa...</span>
      <div className="flex w-[169px] shrink-0 flex-col items-start justify-center gap-0.5"><Bucket /><PenNib /></div>
      <div className="mr-[11px] flex flex-col justify-center gap-[5px]">
        <svg width="30" height="15" viewBox="0 0 30 15" fill="none" stroke="#000" className="bg-white" aria-hidden="true"><path d="M5 2l20 11M25 2L5 13" /></svg>
        <span className="h-[15px] w-[30px] bg-black" />
      </div>
    </footer>
  )
}

export default function App() {
  return (
    <div className="flex h-screen flex-col overflow-hidden bg-[#ece9d8] font-['DejaVu_Sans_Condensed','DejaVu_Sans',sans-serif] text-[11px] text-black">
      <TitleBar />
      <MenuBar />
      <ToolBar />
      <div className="flex min-h-0 flex-1">
        <ToolBox />
        <Workspace />
        <Dockers />
        <Palette />
      </div>
      <StatusBar />
    </div>
  )
}
